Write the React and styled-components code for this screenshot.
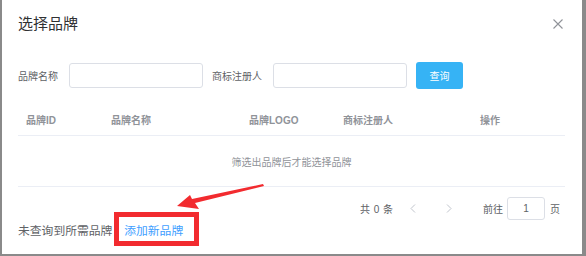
import React from 'react';
import styled, { createGlobalStyle } from 'styled-components';

const GlobalStyle = createGlobalStyle`
  html, body {
    margin: 0;
    padding: 0;
    background: #8a8a8a;
    font-family: "Liberation Sans", "Noto Sans CJK SC", sans-serif;
  }
`;

const Page = styled.div`
  width: 586px;
  height: 256px;
  overflow: hidden;
  background: #8a8a8a;
`;

const Dialog = styled.div`
  position: relative;
  box-sizing: border-box;
  width: 580px;
  height: 254px;
  margin-left: 2px;
  padding: 0 17px 0 16px;
  background: #fff;
  display: flex;
  flex-direction: column;
`;

const Header = styled.div`
  height: 48px;
  display: flex;
  align-items: center;
  justify-content: space-between;
`;

const Title = styled.span`
  font-size: 15px;
  color: #303133;
  line-height: 20px;
`;

const CloseButton = styled.button`
  border: none;
  background: none;
  padding: 0;
  margin-right: 2px;
  width: 10px;
  height: 10px;
  display: flex;
  cursor: pointer;
`;

const SearchForm = styled.div`
  margin-top: 14px;
  height: 27px;
  display: flex;
  align-items: center;
`;

const Label = styled.label`
  font-size: 10px;
  color: #606266;
  margin-left: ${({ $offset }) => $offset || 0}px;
  margin-right: 11px;
  white-space: nowrap;
`;

const TextInput = styled.input`
  box-sizing: border-box;
  width: 134px;
  height: 25px;
  border: 1px solid #dcdfe6;
  border-radius: 3px;
  outline: none;
`;

const SearchButton = styled.button`
  margin-left: 9px;
  width: 47px;
  height: 27px;
  border: none;
  border-radius: 3px;
  background: #36b3f5;
  color: #fff;
  font-size: 10px;
  font-family: inherit;
  cursor: pointer;
`;

const Table = styled.div`
  margin-top: 14px;
`;

const Row = styled.div`
  display: grid;
  grid-template-columns: 85px 138px 94px 137px 93px;
  height: 32px;
  align-items: center;
  border-bottom: 1px solid #ebeef5;
`;

const HeadCell = styled.div`
  padding-left: 8px;
  font-size: 10px;
  font-weight: bold;
  color: #909399;
  white-space: nowrap;
`;

const Empty = styled.div`
  height: 50px;
  display: flex;
  align-items: center;
  justify-content: center;
  font-size: 10px;
  color: #909399;
  border-bottom: 1px solid #ebeef5;
`;

const Pagination = styled.div`
  margin-top: 10px;
  height: 23px;
  display: flex;
  align-items: center;
  justify-content: flex-end;
  padding-right: 5px;
  font-size: 10px;
  color: #606266;
`;

const Total = styled.span`
  margin-right: 10px;
  word-spacing: 1px;
`;

const PageArrow = styled.button`
  width: 20px;
  height: 23px;
  border: none;
  background: none;
  padding: 0;
  margin-right: ${({ $gap }) => $gap || 0}px;
  display: flex;
  align-items: center;
  justify-content: center;
  cursor: not-allowed;
`;

const JumpInput = styled.input`
  box-sizing: border-box;
  width: 38px;
  height: 23px;
  margin: 0 5px 0 4px;
  border: 1px solid #dcdfe6;
  border-radius: 3px;
  text-align: center;
  font-size: 10px;
  color: #606266;
  outline: none;
`;

const Footer = styled.div`
  height: 22px;
  line-height: 22px;
  font-size: 11.8px;
  color: #606266;
`;

const AddLink = styled.a`
  color: #409eff;
  text-decoration: none;
  cursor: pointer;
`;

const Highlight = styled.div`
  position: absolute;
  left: 112px;
  top: 212px;
  width: 85px;
  height: 34px;
  box-sizing: border-box;
  border: 5px solid #f22b2f;
  pointer-events: none;
`;

const ArrowLayer = styled.svg`
  position: absolute;
  left: 0;
  top: 0;
  pointer-events: none;
`;

const Chevron = ({ dir }) => (
  <svg width="6" height="9" viewBox="0 0 6 9">
    <path
      d={dir === 'left' ? 'M5 0.5 L1 4.5 L5 8.5' : 'M1 0.5 L5 4.5 L1 8.5'}
      fill="none"
      stroke="#c0c4cc"
      strokeWidth="1"
    />
  </svg>
);

const columns = ['品牌ID', '品牌名称', '品牌LOGO', '商标注册人', '操作'];

const App = () => (
  <Page>
    <GlobalStyle />
    <Dialog>
      <Header>
        <Title>选择品牌</Title>
        <CloseButton aria-label="close">
          <svg width="10" height="10" viewBox="0 0 10 10">
            <path d="M0.5 0.5 L9.5 9.5 M9.5 0.5 L0.5 9.5" stroke="#909399" strokeWidth="1.1" />
          </svg>
        </CloseButton>
      </Header>

      <SearchForm>
        <Label>品牌名称</Label>
        <TextInput />
        <Label $offset={9}>商标注册人</Label>
        <TextInput />
        <SearchButton>查询</SearchButton>
      </SearchForm>

      <Table>
        <Row>
          {columns.map((c) => (
            <HeadCell key={c}>{c}</HeadCell>
          ))}
        </Row>
        <Empty>筛选出品牌后才能选择品牌</Empty>
      </Table>

      <Pagination>
        <Total>共 0 条</Total>
        <PageArrow $gap={16}><Chevron dir="left" /></PageArrow>
        <PageArrow $gap={24}><Chevron dir="right" /></PageArrow>
        <span>前往</span>
        <JumpInput defaultValue="1" />
        <span>页</span>
      </Pagination>

      <Footer>
        未查询到所需品牌，<AddLink>添加新品牌</AddLink>
      </Footer>

      <ArrowLayer width="580" height="254">
        <polygon
          points="175,206 188,195 190,199 261,184 262,186 193,203 197,209"
          fill="#f22b2f"
        />
      </ArrowLayer>
      <Highlight />
    </Dialog>
  </Page>
);

export default App;
